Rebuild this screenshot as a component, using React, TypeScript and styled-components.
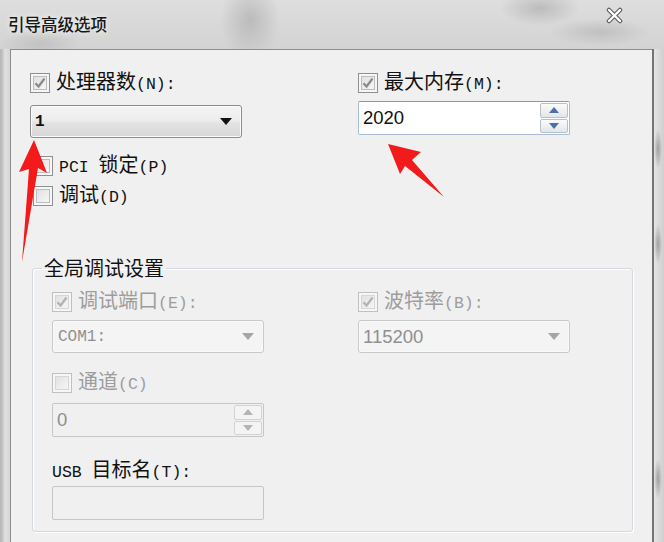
import React from "react";
import styled, { createGlobalStyle } from "styled-components";

const GlobalStyle = createGlobalStyle`
  html, body {
    margin: 0;
    padding: 0;
  }
  body {
    width: 664px;
    height: 542px;
    overflow: hidden;
    font-family: "Noto Sans CJK SC", "Noto Sans", sans-serif;
  }
`;

const Window = styled.div`
  position: relative;
  width: 664px;
  height: 542px;
  display: flex;
  flex-direction: column;
  overflow: hidden;
  background: #d4d4d4;
`;

const TitleBar = styled.div`
  height: 49px;
  flex: none;
  box-sizing: border-box;
  display: flex;
  justify-content: space-between;
  align-items: flex-start;
  padding: 0 41px 0 8px;
  background:
    radial-gradient(ellipse 30px 40px at 250px 20px, rgba(150, 150, 150, 0.45), transparent),
    radial-gradient(ellipse 40px 18px at 540px 8px, rgba(140, 140, 140, 0.4), transparent),
    radial-gradient(ellipse 50px 14px at 600px 32px, rgba(150, 150, 150, 0.35), transparent),
    radial-gradient(ellipse 40px 14px at 40px 44px, rgba(160, 160, 160, 0.35), transparent),
    linear-gradient(to bottom, #dedede, #d3d3d3);
`;

const Title = styled.div`
  margin-top: 14px;
  font-size: 16.5px;
  font-weight: 500;
  line-height: 20px;
  color: #161616;
  text-shadow: 0 0 6px rgba(255, 255, 255, 0.9);
`;

const CloseIcon = styled.svg`
  margin-top: 7px;
  width: 17px;
  height: 17px;
`;

const Frame = styled.div`
  flex: 1;
  display: flex;
  min-height: 0;
`;

const LeftFrame = styled.div`
  width: 10px;
  flex: none;
  background: linear-gradient(to right, #b4b4b4 0, #c8c8c8 3px, #e2e2e2 5px, #d6d6d6 9px);
`;

const RightFrame = styled.div`
  width: 12px;
  flex: none;
  border-left: 2px solid #747474;
  box-sizing: border-box;
  background:
    radial-gradient(ellipse 4px 20px at 4px 100px, rgba(120, 120, 120, 0.6), transparent),
    radial-gradient(ellipse 4px 20px at 4px 195px, rgba(120, 120, 120, 0.6), transparent),
    radial-gradient(ellipse 4px 20px at 4px 430px, rgba(120, 120, 120, 0.6), transparent),
    linear-gradient(to right, #e4e4e4, #cfcfcf);
`;

const Client = styled.div`
  flex: 1;
  background: #f0f0f0;
  border-left: 1px solid #8d8d8d;
  border-top: 1px solid #8d8d8d;
  padding: 23px 19px 0 19px;
  box-sizing: border-box;
`;

const Columns = styled.div<{ $left: number }>`
  display: grid;
  grid-template-columns: ${(p) => p.$left}px 1fr;
  align-items: start;
`;

const Stack = styled.div`
  display: flex;
  flex-direction: column;
  align-items: flex-start;
`;

const CheckRow = styled.label<{ $disabled?: boolean; $top?: number; $indent?: number }>`
  display: flex;
  align-items: center;
  gap: 6px;
  height: 20px;
  margin-top: ${(p) => p.$top ?? 0}px;
  margin-left: ${(p) => p.$indent ?? 0}px;
  font-size: 20px;
  line-height: 20px;
  color: ${(p) => (p.$disabled ? "#9d9d9d" : "#111")};
  white-space: nowrap;
`;

const PlainLabel = styled.div<{ $top: number }>`
  height: 20px;
  margin-top: ${(p) => p.$top}px;
  font-size: 20px;
  line-height: 20px;
  color: #111;
  white-space: nowrap;
`;

const Hot = styled.span`
  font-family: "Liberation Mono", monospace;
  font-size: 16.5px;
`;

const Box = styled.span<{ $disabled?: boolean }>`
  width: 20px;
  height: 20px;
  flex: none;
  box-sizing: border-box;
  display: inline-flex;
  align-items: center;
  justify-content: center;
  border: 1px solid ${(p) => (p.$disabled ? "#c0c0c0" : "#8e8f8f")};
  box-shadow: inset 0 0 0 2px #f6f6f6,
    inset 0 0 0 3px ${(p) => (p.$disabled ? "#d6d6d6" : "#b9bcc0")};
  background: linear-gradient(135deg, #dcdcdc, #fbfbfb);
`;

const Dropdown = styled.div<{ $disabled?: boolean; $top: number }>`
  width: 212px;
  height: 33px;
  margin-top: ${(p) => p.$top}px;
  box-sizing: border-box;
  display: flex;
  align-items: center;
  justify-content: space-between;
  padding: 0 9px 0 4px;
  border: 1px solid ${(p) => (p.$disabled ? "#c9c9c9" : "#8c8c8c")};
  border-radius: 3px;
  background: ${(p) =>
    p.$disabled
      ? "#f4f4f4"
      : "linear-gradient(to bottom, #f4f4f4 0%, #ededed 45%, #e3e3e3 55%, #d6d6d6 100%)"};
  box-shadow: inset 0 0 0 1px ${(p) => (p.$disabled ? "#fafafa" : "#fbfbfb")};
`;

const Value = styled.span<{ $mono?: boolean; $disabled?: boolean }>`
  font-family: ${(p) =>
    p.$mono ? '"Liberation Mono", monospace' : '"Liberation Sans", Arial, sans-serif'};
  font-size: ${(p) => (p.$mono ? "16px" : "18.5px")};
  font-weight: ${(p) => (p.$mono && !p.$disabled ? 700 : 400)};
  color: ${(p) => (p.$disabled ? "#8f8f8f" : "#111")};
  padding-left: ${(p) => (p.$mono && p.$disabled ? 1 : 0)}px;
`;

const TextBox = styled.div<{ $disabled?: boolean; $top: number }>`
  width: 212px;
  height: 34px;
  margin-top: ${(p) => p.$top}px;
  box-sizing: border-box;
  display: flex;
  align-items: center;
  justify-content: space-between;
  padding: 0 1px 0 4px;
  border: 1px solid ${(p) => (p.$disabled ? "#c6c6c6" : "#a9bdd6")};
  border-top-color: ${(p) => (p.$disabled ? "#c6c6c6" : "#7d9cc4")};
  border-radius: 2px;
  background: ${(p) => (p.$disabled ? "#f0f0f0" : "#fff")};
`;

const SpinCol = styled.div`
  width: 28px;
  height: 30px;
  display: flex;
  flex-direction: column;
  gap: 1px;
`;

const SpinBtn = styled.div<{ $disabled?: boolean }>`
  flex: 1;
  display: flex;
  align-items: center;
  justify-content: center;
  border: 1px solid ${(p) => (p.$disabled ? "#d2d2d2" : "#b9bfc6")};
  border-radius: 2px;
  background: ${(p) =>
    p.$disabled ? "#f4f4f4" : "linear-gradient(to bottom, #fbfbfb, #e3e6ea)"};
`;

const Group = styled.fieldset`
  margin: 50px 0 0 2px;
  padding: 12px 19px 11px 19px;
  border: 1px solid #d3d9de;
  border-radius: 3px;
  box-shadow: 1px 1px 0 #ffffff, inset 1px 1px 0 #ffffff;
  min-width: 0;
`;

const Legend = styled.legend`
  margin-left: -10px;
  padding: 0 2px;
  font-size: 20px;
  line-height: 24px;
  color: #111;
`;

const Annotations = styled.svg`
  position: absolute;
  left: 0;
  top: 0;
  width: 664px;
  height: 542px;
  pointer-events: none;
`;

const Check = ({ disabled }: { disabled?: boolean }) => (
  <svg width="14" height="14" viewBox="0 0 14 14">
    <path
      d="M2.5 7.2 L5.6 10.5 L11.5 2.5"
      fill="none"
      stroke={disabled ? "#b2b2b2" : "#8a8a8a"}
      strokeWidth="2.2"
    />
  </svg>
);

const Caret = ({ disabled }: { disabled?: boolean }) => (
  <svg width="12" height="7" viewBox="0 0 12 7">
    <path d="M0 0 L12 0 L6 7 Z" fill={disabled ? "#a5a5a5" : "#111"} />
  </svg>
);

const Tri = ({ up, disabled }: { up?: boolean; disabled?: boolean }) => (
  <svg width="10" height="6" viewBox="0 0 10 6">
    <path d={up ? "M0 6 L10 6 L5 0 Z" : "M0 0 L10 0 L5 6 Z"} fill={disabled ? "#b4b4b4" : "#4d6fa8"} />
  </svg>
);

const CheckItem = ({
  checked,
  disabled,
  top,
  indent,
  children,
}: {
  checked?: boolean;
  disabled?: boolean;
  top?: number;
  indent?: number;
  children: React.ReactNode;
}) => (
  <CheckRow $disabled={disabled} $top={top} $indent={indent}>
    <Box $disabled={disabled}>{checked && <Check disabled={disabled} />}</Box>
    <span>{children}</span>
  </CheckRow>
);

const Spinner = ({ disabled }: { disabled?: boolean }) => (
  <SpinCol>
    <SpinBtn $disabled={disabled}>
      <Tri up disabled={disabled} />
    </SpinBtn>
    <SpinBtn $disabled={disabled}>
      <Tri disabled={disabled} />
    </SpinBtn>
  </SpinCol>
);

export default function App() {
  return (
    <>
      <GlobalStyle />
      <Window>
        <TitleBar>
          <Title>引导高级选项</Title>
          <CloseIcon viewBox="0 0 17 17">
            <path d="M3 3 L14 14 M14 3 L3 14" stroke="#5b5b5b" strokeWidth="4.5" strokeLinecap="round" />
            <path d="M3 3 L14 14 M14 3 L3 14" stroke="#ffffff" strokeWidth="2.4" strokeLinecap="round" />
          </CloseIcon>
        </TitleBar>
        <Frame>
          <LeftFrame />
          <Client>
            <Columns $left={328}>
              <Stack>
                <CheckItem checked>
                  处理器数<Hot>(N):</Hot>
                </CheckItem>
                <Dropdown $top={12}>
                  <Value $mono>1</Value>
                  <Caret />
                </Dropdown>
                <CheckItem top={18} indent={3}>
                  <Hot>PCI </Hot> 锁定<Hot>(P)</Hot>
                </CheckItem>
                <CheckItem top={10} indent={3}>
                  调试<Hot>(D)</Hot>
                </CheckItem>
              </Stack>
              <Stack>
                <CheckItem checked>
                  最大内存<Hot>(M):</Hot>
                </CheckItem>
                <TextBox $top={8}>
                  <Value>2020</Value>
                  <Spinner />
                </TextBox>
              </Stack>
            </Columns>

            <Group>
              <Legend>全局调试设置</Legend>
              <Columns $left={306}>
                <Stack>
                  <CheckItem checked disabled>
                    调试端口<Hot>(E):</Hot>
                  </CheckItem>
                  <Dropdown $disabled $top={8}>
                    <Value $mono $disabled>
                      COM1:
                    </Value>
                    <Caret disabled />
                  </Dropdown>
                  <CheckItem disabled top={20}>
                    通道<Hot>(C)</Hot>
                  </CheckItem>
                  <TextBox $disabled $top={10}>
                    <Value $disabled>0</Value>
                    <Spinner disabled />
                  </TextBox>
                  <PlainLabel $top={22}>
                    <Hot>USB </Hot> 目标名<Hot>(T):</Hot>
                  </PlainLabel>
                  <TextBox $disabled $top={7} />
                </Stack>
                <Stack>
                  <CheckItem checked disabled>
                    波特率<Hot>(B):</Hot>
                  </CheckItem>
                  <Dropdown $disabled $top={8}>
                    <Value $disabled>115200</Value>
                    <Caret disabled />
                  </Dropdown>
                </Stack>
              </Columns>
            </Group>
          </Client>
          <RightFrame />
        </Frame>

        <Annotations viewBox="0 0 664 542">
          <polygon points="34,140 47,173 38,168 22,262 29,169 19,172" fill="#f21a1a" />
          <polygon points="388,144 421,152 412,160 444,197 405,166 400,174" fill="#f21a1a" />
        </Annotations>
      </Window>
    </>
  );
}
